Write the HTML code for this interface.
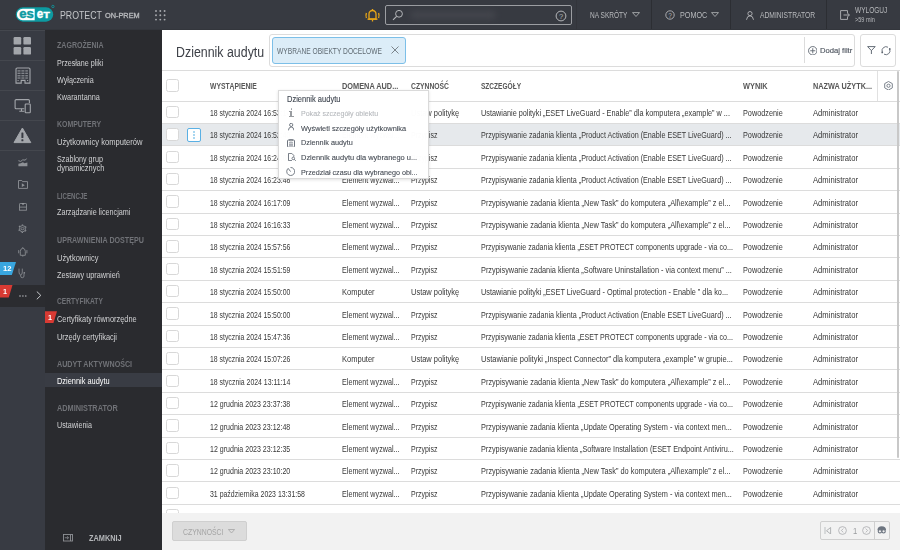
<!DOCTYPE html>
<html><head><meta charset="utf-8"><style>
*{box-sizing:border-box;margin:0;padding:0}
html,body{width:900px;height:550px;overflow:hidden;background:#fff;font-family:"Liberation Sans",sans-serif;}
.a{position:absolute}
.t{position:absolute;white-space:nowrap;line-height:0;transform-origin:0 0;transform:scaleX(var(--sx));}
.t::before{content:"";}
#hdr{left:0;top:0;width:900px;height:30px;background:#373a41;}
#s1{left:0;top:30px;width:45px;height:520px;background:#383b43;}
#s2{left:45px;top:30px;width:116.5px;height:520px;background:#2a2b2f;}
#main{left:161.5px;top:30px;width:738.5px;height:520px;background:#fff;}
.hd{color:#b8babd;font-size:8.5px;}
.sh{color:#707277;font-size:8.6px;font-weight:bold;}
.si{color:#d0d1d3;font-size:8.4px;}
.th{color:#575757;font-size:8.5px;font-weight:bold;}
.td{color:#383838;font-size:8.6px;}
.sep{position:absolute;background:#e1e1e1;height:1px;}
.cb{position:absolute;width:12.5px;height:12.5px;border:1px solid #d8d8d8;border-radius:2.5px;background:#fff;}
</style></head><body>

<div id="hdr" class="a"></div>
<div class="a" style="left:0;top:29px;width:900px;height:1px;background:#33363c"></div>
<svg class="a" style="left:15px;top:4px" width="41" height="19" viewBox="0 -2 41 19">
<rect x="0.8" y="1.3" width="37.4" height="14.4" rx="7.2" fill="#0d9aa1"/>
<path d="M7.7 2.7 H19.7 V14.3 H7.7 a5.8 5.8 0 0 1 0 -11.6 Z" fill="#fff"/>
<text x="4.2" y="11.6" textLength="14.5" lengthAdjust="spacingAndGlyphs" font-family="Liberation Sans" font-weight="bold" font-size="12.3" fill="#0d9aa1" stroke="#0d9aa1" stroke-width="0.45">es</text>
<text x="21.7" y="11.6" textLength="6.4" lengthAdjust="spacingAndGlyphs" font-family="Liberation Sans" font-weight="bold" font-size="12.3" fill="#fff" stroke="#fff" stroke-width="0.45">e</text>
<text x="28.5" y="11.6" textLength="6.2" lengthAdjust="spacingAndGlyphs" font-family="Liberation Sans" font-weight="bold" font-size="8.9" fill="#fff" stroke="#fff" stroke-width="0.45">T</text>
<circle cx="37.9" cy="0.5" r="1.2" fill="none" stroke="#0d9aa1" stroke-width="0.8"/>
</svg>
<div class="t hd" style="left:59.8px;top:14.8px;--sx:0.8121;font-size:10.8px;color:#c4c6c9;">PROTECT</div>
<div class="t hd" style="left:104.6px;top:15.8px;--sx:1.0662;font-size:6.9px;color:#b8babd;-webkit-text-stroke:0.3px #b8babd;">ON-PREM</div>
<svg class="a" style="left:155px;top:9.5px" width="12" height="12"><circle cx="1.0" cy="1.0" r="0.95" fill="#a9abaf"/><circle cx="1.0" cy="5.3" r="0.95" fill="#a9abaf"/><circle cx="1.0" cy="9.6" r="0.95" fill="#a9abaf"/><circle cx="5.3" cy="1.0" r="0.95" fill="#a9abaf"/><circle cx="5.3" cy="5.3" r="0.95" fill="#a9abaf"/><circle cx="5.3" cy="9.6" r="0.95" fill="#a9abaf"/><circle cx="9.6" cy="1.0" r="0.95" fill="#a9abaf"/><circle cx="9.6" cy="5.3" r="0.95" fill="#a9abaf"/><circle cx="9.6" cy="9.6" r="0.95" fill="#a9abaf"/></svg>
<svg class="a" style="left:364px;top:7px" width="17" height="16" viewBox="0 0 17 16">
<g fill="none" stroke="#e8a617" stroke-width="1.3">
<path d="M5 12 V7 a3.5 3.5 0 0 1 7 0 V12 Z"/>
<path d="M3.5 12.2 h10"/>
<path d="M8.5 2 v1.5 M8.5 12.5 v2"/>
<path d="M2.4 6 q-0.9 2.5 0 5 M14.6 6 q0.9 2.5 0 5"/>
</g></svg>
<div class="a" style="left:385.3px;top:5.2px;width:186.5px;height:19.7px;border:1px solid #9c9ea2;border-radius:2px"></div>
<div class="a" style="left:410px;top:11px;width:86px;height:8px;background:#45474e;filter:blur(3px);border-radius:4px;opacity:.9"></div>
<svg class="a" style="left:392px;top:8.5px" width="12" height="12" viewBox="0 0 12 12">
<circle cx="7" cy="4.8" r="3.4" fill="none" stroke="#b4b6b9" stroke-width="1"/>
<path d="M4.6 7.3 L1 10.9" stroke="#b4b6b9" stroke-width="1.1"/></svg>
<svg class="a" style="left:554.5px;top:9.5px" width="12" height="12" viewBox="0 0 12 12">
<circle cx="6" cy="6" r="4.9" fill="none" stroke="#b4b6b9" stroke-width="1"/>
<text x="6" y="8.9" text-anchor="middle" font-family="Liberation Sans" font-size="7.5" fill="#b4b6b9">?</text></svg>
<div class="a" style="left:576.2px;top:0;width:1px;height:29px;background:#33353b"></div>
<div class="a" style="left:650.8px;top:0;width:1px;height:29px;background:#2c2e33"></div>
<div class="a" style="left:730.4px;top:0;width:1px;height:29px;background:#2c2e33"></div>
<div class="a" style="left:826.1px;top:0;width:1px;height:29px;background:#2c2e33"></div>
<div class="t hd" style="left:589.6px;top:15.1px;--sx:0.7687;">NA SKRÓTY</div>
<svg class="a" style="left:631.5px;top:12.4px" width="8" height="5" viewBox="0 0 8 5"><path d="M0.5 0.6 h7 L4 4.5z" fill="none" stroke="#b8babd" stroke-width="0.8"/></svg>
<svg class="a" style="left:665px;top:10.3px" width="10" height="10" viewBox="0 0 10 10">
<circle cx="5" cy="5" r="4.2" fill="none" stroke="#b4b6b9" stroke-width="0.9"/>
<text x="5" y="7.6" text-anchor="middle" font-family="Liberation Sans" font-size="6.5" fill="#b4b6b9">?</text></svg>
<div class="t hd" style="left:679.6px;top:15.1px;--sx:0.8467;">POMOC</div>
<svg class="a" style="left:711px;top:12.4px" width="8" height="5" viewBox="0 0 8 5"><path d="M0.5 0.6 h7 L4 4.5z" fill="none" stroke="#b8babd" stroke-width="0.8"/></svg>
<svg class="a" style="left:745.5px;top:10.5px" width="8" height="9" viewBox="0 0 8 9">
<circle cx="4" cy="2.6" r="2.1" fill="none" stroke="#b4b6b9" stroke-width="0.9"/>
<path d="M0.5 8.8 q0.5 -4 3.5 -4 q3 0 3.5 4" fill="none" stroke="#b4b6b9" stroke-width="0.9"/></svg>
<div class="t hd" style="left:759.5px;top:15.1px;--sx:0.7934;">ADMINISTRATOR</div>
<svg class="a" style="left:839.5px;top:10.3px" width="10" height="10" viewBox="0 0 10 10">
<path d="M7.5 3 V0.6 H0.6 V9.4 H7.5 V7" fill="none" stroke="#b4b6b9" stroke-width="0.9"/>
<path d="M3.5 5 H9.4 M7.4 3 L9.4 5 L7.4 7" fill="none" stroke="#b4b6b9" stroke-width="0.9"/></svg>
<div class="t hd" style="left:854.9px;top:10.3px;--sx:0.7685;">WYLOGUJ</div>
<div class="t hd" style="left:855px;top:20.2px;--sx:0.88;font-size:6.3px;">&gt;59 min</div>
<div id="s1" class="a"></div>
<div class="a" style="left:0;top:30px;width:45px;height:1px;background:#44474e"></div>
<div class="a" style="left:0;top:60px;width:45px;height:1px;background:#44474e"></div>
<div class="a" style="left:0;top:90px;width:45px;height:1px;background:#44474e"></div>
<div class="a" style="left:0;top:120px;width:45px;height:1px;background:#44474e"></div>
<div class="a" style="left:0;top:150px;width:45px;height:1px;background:#44474e"></div>
<svg class="a" style="left:13px;top:37px" width="19" height="18" viewBox="0 0 19 18">
<rect x="0.6" y="0" width="7.6" height="7.6" rx="1.2" fill="#a3a6ab"/><rect x="10.4" y="0" width="7.6" height="7.6" rx="1.2" fill="#a3a6ab"/>
<rect x="0.6" y="10" width="7.6" height="7.6" rx="1.2" fill="#a3a6ab"/><rect x="10.4" y="10" width="7.6" height="7.6" rx="1.2" fill="#a3a6ab"/></svg>
<svg class="a" style="left:14.5px;top:66.5px" width="16" height="17" viewBox="0 0 16 17">
<path d="M1 16.1 V2.2 a1.2 1.2 0 0 1 1.2 -1.2 H13.8 a1.2 1.2 0 0 1 1.2 1.2 V16.1 H10 V13.4 H6.2 V16.1 Z" fill="none" stroke="#a3a6ab" stroke-width="1.1"/>
<g fill="#a3a6ab"><rect x="2.5" y="3.45" width="3" height="0.95"/><rect x="6.4" y="3.45" width="3" height="0.95"/><rect x="10.3" y="3.45" width="2.6" height="0.95"/><rect x="2.5" y="5.75" width="3" height="0.95"/><rect x="6.4" y="5.75" width="3" height="0.95"/><rect x="10.3" y="5.75" width="2.6" height="0.95"/><rect x="2.5" y="8.35" width="3" height="0.95"/><rect x="6.4" y="8.35" width="3" height="0.95"/><rect x="10.3" y="8.35" width="2.6" height="0.95"/><rect x="2.5" y="10.55" width="3" height="0.95"/><rect x="6.4" y="10.55" width="3" height="0.95"/><rect x="10.3" y="10.55" width="2.6" height="0.95"/><rect x="2.5" y="13" width="1.2" height="0.9"/><rect x="12" y="13" width="1.2" height="0.9"/></g></svg>
<svg class="a" style="left:13.5px;top:97.5px" width="18" height="16" viewBox="0 0 18 16">
<path d="M10.3 10.8 H2.1 a1 1 0 0 1 -1 -1 V2.6 a1 1 0 0 1 1 -1 H14.4 a1 1 0 0 1 1 1 V5" fill="none" stroke="#a3a6ab" stroke-width="1.1"/>
<path d="M5.3 13.3 H10.3 M7.5 10.8 V13.3" fill="none" stroke="#a3a6ab" stroke-width="1.1"/>
<rect x="11.2" y="6.0" width="5.1" height="8.7" rx="0.8" fill="none" stroke="#a3a6ab" stroke-width="1.1"/></svg>
<svg class="a" style="left:13px;top:127px" width="19" height="17" viewBox="0 0 19 17">
<path d="M9.4 1 L17.8 15.6 H1 Z" fill="#a3a6ab" stroke="#a3a6ab" stroke-width="1" stroke-linejoin="round"/>
<rect x="8.4" y="5.4" width="2" height="5.6" rx="0.5" fill="#383b43"/><rect x="8.4" y="12.3" width="2" height="1.9" rx="0.5" fill="#383b43"/></svg>
<svg class="a" style="left:17.5px;top:157.5px" width="10" height="9" viewBox="0 0 10 9">
<path d="M0.4 2.7 L2.7 3.4 L4.7 1.9 L7.3 2.1 L8.5 0.6" fill="none" stroke="#8e9196" stroke-width="1" stroke-linejoin="round"/>
<path d="M0.4 8.3 V5.7 L2.7 5.3 L4.9 4.2 L6.5 5.3 L9.4 4.4 V8.3 Z" fill="#8e9196"/></svg>
<svg class="a" style="left:17.5px;top:180px" width="10" height="9" viewBox="0 0 10 9">
<path d="M0.5 8.4 V0.5 H3.8 L4.6 1.6 H9.5 V8.4 Z" fill="none" stroke="#8e9196" stroke-width="0.9"/>
<path d="M3.8 3.3 V7 L6.8 5.15 Z" fill="#8e9196"/></svg>
<svg class="a" style="left:18.6px;top:202.6px" width="9" height="8" viewBox="0 0 9 8">
<path d="M0.5 4 V1.1 Q0.5 0.5 1.1 0.5 H6.9 Q7.5 0.5 7.5 1.1 V4" fill="none" stroke="#8e9196" stroke-width="0.85"/>
<rect x="0.45" y="4.1" width="7.1" height="3.1" fill="none" stroke="#8e9196" stroke-width="0.85"/>
<path d="M2.5 0.3 H5.5 L4 2.3 Z" fill="#9a9da2"/></svg>
<svg class="a" style="left:17.7px;top:223.8px" width="9" height="9.4" viewBox="0 0 9 9.4">
<circle cx="4.5" cy="4.7" r="3.1" fill="none" stroke="#8e9196" stroke-width="0.85"/>
<circle cx="4.5" cy="4.7" r="3.75" fill="none" stroke="#8e9196" stroke-width="1.1" stroke-dasharray="1.3 2.6" transform="rotate(-100 4.5 4.7)"/>
<ellipse cx="4.5" cy="4.7" rx="1.6" ry="1.1" fill="none" stroke="#8e9196" stroke-width="0.8"/></svg>
<svg class="a" style="left:17.5px;top:246.5px" width="11" height="10.5" viewBox="0 0 11 10.5">
<path d="M2.3 8.3 V4.4 Q2.3 1.7 4.8 1.2 Q7.3 1.7 7.3 4.4 V8.3 Z" fill="none" stroke="#8e9196" stroke-width="0.85"/>
<path d="M4.8 0.2 V1.2 M4.8 8.4 V9.6 M0.7 3.1 V6.3 M8.9 3.1 V6.3" fill="none" stroke="#8e9196" stroke-width="0.85"/></svg>
<svg class="a" style="left:18px;top:268px" width="8" height="10.5" viewBox="0 0 8 10.5">
<path d="M1 0.6 V4 Q1 6.8 2.7 6.8 Q4.3 6.8 4.3 4 V0.6" fill="none" stroke="#8e9196" stroke-width="0.8"/>
<path d="M2.7 6.8 V8.1 Q2.7 9.7 4.3 9.7 Q6 9.7 6 8 V5.6" fill="none" stroke="#8e9196" stroke-width="0.8"/>
<circle cx="6.3" cy="4.8" r="0.85" fill="#8e9196"/></svg>
<div class="a" style="left:0;top:262px;width:16px;height:13px;background:#39a6df;clip-path:polygon(0 0,100% 0,74% 100%,0 100%)"></div>
<div class="t " style="left:3.4px;top:269.4px;--sx:1.05;color:#fff;font-size:7.3px;font-weight:bold;">12</div>
<div class="a" style="left:0;top:285px;width:45px;height:21.9px;background:#2b2c30"></div>
<div class="a" style="left:0;top:285px;width:12.5px;height:12.5px;background:#d83a33;clip-path:polygon(0 0,100% 0,70% 100%,0 100%)"></div>
<div class="t " style="left:3.0px;top:291.9px;--sx:0.999;color:#fff;font-size:7.3px;font-weight:bold;">1</div>
<svg class="a" style="left:19px;top:295px" width="9" height="2"><circle cx="1.0" cy="1" r="0.8" fill="#b0b2b6"/><circle cx="3.9" cy="1" r="0.8" fill="#b0b2b6"/><circle cx="6.8" cy="1" r="0.8" fill="#b0b2b6"/></svg>
<svg class="a" style="left:35.5px;top:291.3px" width="6" height="9" viewBox="0 0 6 9"><path d="M0.8 0.5 L4.8 4.4 L0.8 8.3" fill="none" stroke="#c9cbce" stroke-width="1"/></svg>
<div id="s2" class="a"></div>
<div class="a" style="left:45px;top:373px;width:116.5px;height:14.3px;background:#393c44"></div>
<div class="t sh" style="left:57.3px;top:45.2px;--sx:0.8202;">ZAGROŻENIA</div>
<div class="t si" style="left:57.3px;top:62.7px;--sx:0.8537;">Przesłane pliki</div>
<div class="t si" style="left:57.3px;top:79.5px;--sx:0.8585;">Wyłączenia</div>
<div class="t si" style="left:57.3px;top:97px;--sx:0.8671;">Kwarantanna</div>
<div class="t sh" style="left:57.3px;top:124px;--sx:0.806;">KOMPUTERY</div>
<div class="t si" style="left:57.3px;top:142px;--sx:0.9039;">Użytkownicy komputerów</div>
<div class="t si" style="left:57.3px;top:158.6px;--sx:0.8591;">Szablony grup</div>
<div class="t si" style="left:57.3px;top:168.4px;--sx:0.893;">dynamicznych</div>
<div class="t sh" style="left:57.3px;top:195.6px;--sx:0.7153;">LICENCJE</div>
<div class="t si" style="left:57.3px;top:212.4px;--sx:0.8616;">Zarządzanie licencjami</div>
<div class="t sh" style="left:57.3px;top:239.8px;--sx:0.8297;">UPRAWNIENIA DOSTĘPU</div>
<div class="t si" style="left:57.3px;top:257.8px;--sx:0.8916;">Użytkownicy</div>
<div class="t si" style="left:57.3px;top:275.2px;--sx:0.8703;">Zestawy uprawnień</div>
<div class="t sh" style="left:57.3px;top:301.4px;--sx:0.7693;">CERTYFIKATY</div>
<div class="t si" style="left:57.3px;top:319.3px;--sx:0.8825;">Certyfikaty równorzędne</div>
<div class="t si" style="left:57.3px;top:336.8px;--sx:0.883;">Urzędy certyfikacji</div>
<div class="t sh" style="left:57.3px;top:363.7px;--sx:0.8308;">AUDYT AKTYWNOŚCI</div>
<div class="t si" style="left:57.3px;top:380.8px;--sx:0.8843;color:#fff;">Dziennik audytu</div>
<div class="t sh" style="left:57.3px;top:408px;--sx:0.8514;">ADMINISTRATOR</div>
<div class="t si" style="left:57.3px;top:425.3px;--sx:0.8519;">Ustawienia</div>
<div class="a" style="left:45px;top:311.2px;width:12px;height:12px;background:#d83a33;clip-path:polygon(0 0,100% 0,70% 100%,0 100%)"></div>
<div class="t " style="left:47.6px;top:317.9px;--sx:0.999;color:#fff;font-size:7.3px;font-weight:bold;">1</div>
<svg class="a" style="left:62.5px;top:534px" width="10" height="7.5" viewBox="0 0 10 7.5">
<rect x="0.5" y="0.5" width="9" height="6.5" fill="none" stroke="#8e9196" stroke-width="0.9"/>
<path d="M7.5 0.5 V7" stroke="#8e9196" stroke-width="0.9"/>
<path d="M1.8 3.75 H5.5 M4 2.3 L5.5 3.75 L4 5.2" fill="none" stroke="#8e9196" stroke-width="0.8"/></svg>
<div class="t sh" style="left:89.3px;top:538px;--sx:0.856;color:#b4b6b9;">ZAMKNIJ</div>
<div id="main" class="a"></div>

<div class="t " style="left:175.8px;top:51.5px;--sx:0.885;font-size:14px;color:#3d4047;">Dziennik audytu</div>
<div class="a" style="left:268.9px;top:34.2px;width:586.3px;height:32.6px;border:1px solid #dcdcdc;border-radius:3px"></div>
<div class="a" style="left:271.9px;top:37.2px;width:134px;height:26.5px;border:1px solid #7cbfe8;border-radius:3px;background:#dcedf8"></div>
<div class="t " style="left:277.4px;top:51.1px;--sx:0.8021;font-size:8.3px;color:#5f6a72;">WYBRANE OBIEKTY DOCELOWE</div>
<svg class="a" style="left:391px;top:46px" width="8" height="8" viewBox="0 0 8 8"><path d="M0.5 0.5 L7.5 7.5 M7.5 0.5 L0.5 7.5" stroke="#7b848b" stroke-width="1"/></svg>
<div class="a" style="left:804px;top:37.3px;width:1px;height:25.7px;background:#dcdcdc"></div>
<svg class="a" style="left:807.5px;top:45.8px" width="9.5" height="9.5" viewBox="0 0 9.5 9.5">
<circle cx="4.75" cy="4.75" r="4.2" fill="none" stroke="#5d6570" stroke-width="0.9"/>
<path d="M4.75 2.2 V7.3 M2.2 4.75 H7.3" stroke="#5d6570" stroke-width="0.9"/></svg>
<div class="t " style="left:819.7px;top:51px;--sx:0.9557;font-size:8px;color:#4f5660;-webkit-text-stroke:0.15px #4f5660;">Dodaj filtr</div>
<div class="a" style="left:860.4px;top:34.2px;width:35.6px;height:32.6px;border:1px solid #dcdcdc;border-radius:3px"></div>
<svg class="a" style="left:866.5px;top:46px" width="9" height="8.5" viewBox="0 0 9 8.5">
<path d="M0.6 0.6 H8.2 L4.4 4.6 Z M4.4 4.4 V8" fill="none" stroke="#5d6570" stroke-width="0.95" stroke-linejoin="round"/></svg>
<svg class="a" style="left:880.5px;top:45.8px" width="10" height="10" viewBox="0 0 10 10">
<path d="M7 1.24 A4 4 0 0 0 1.24 6.07 M3 8.16 A4 4 0 0 0 8.76 3.33" fill="none" stroke="#5d6570" stroke-width="0.9"/>
<circle cx="8.76" cy="3.0" r="0.9" fill="#5d6570"/><circle cx="1.24" cy="6.4" r="0.9" fill="#5d6570"/></svg>
<div class="a" style="left:161.5px;top:70px;width:738.5px;height:1px;background:#dcdcdc"></div>
<div class="cb" style="left:166.4px;top:79px"></div>
<div class="t th" style="left:209.7px;top:85.7px;--sx:0.7974;">WYSTĄPIENIE</div>
<div class="t th" style="left:341.7px;top:85.7px;--sx:0.8659;">DOMENA AUD...</div>
<div class="t th" style="left:411px;top:85.7px;--sx:0.7966;">CZYNNOŚĆ</div>
<div class="t th" style="left:480.7px;top:85.7px;--sx:0.7699;">SZCZEGÓŁY</div>
<div class="t th" style="left:743.2px;top:85.7px;--sx:0.8679;">WYNIK</div>
<div class="t th" style="left:813.2px;top:85.7px;--sx:0.8597;">NAZWA UŻYTK...</div>
<div class="a" style="left:877.3px;top:70.5px;width:1px;height:31px;background:#e1e1e1"></div>
<svg class="a" style="left:884.3px;top:80.8px" width="9" height="9.5" viewBox="0 0 9 9.5">
<path d="M4.5 0.5 L8.3 2.6 V6.9 L4.5 9 L0.7 6.9 V2.6 Z" fill="none" stroke="#6d7580" stroke-width="0.9" stroke-linejoin="round"/>
<circle cx="4.5" cy="4.75" r="1.6" fill="none" stroke="#6d7580" stroke-width="0.9"/></svg>
<div class="a" style="left:161.5px;top:101px;width:738.5px;height:1px;background:#dcdcdc"></div>
<div class="a" style="left:161.5px;top:123px;width:738.5px;height:1px;background:#dcdcdc"></div>
<div class="a" style="left:161.5px;top:145px;width:738.5px;height:1px;background:#dcdcdc"></div>
<div class="a" style="left:161.5px;top:168px;width:738.5px;height:1px;background:#dcdcdc"></div>
<div class="a" style="left:161.5px;top:190px;width:738.5px;height:1px;background:#dcdcdc"></div>
<div class="a" style="left:161.5px;top:213px;width:738.5px;height:1px;background:#dcdcdc"></div>
<div class="a" style="left:161.5px;top:235px;width:738.5px;height:1px;background:#dcdcdc"></div>
<div class="a" style="left:161.5px;top:257px;width:738.5px;height:1px;background:#dcdcdc"></div>
<div class="a" style="left:161.5px;top:280px;width:738.5px;height:1px;background:#dcdcdc"></div>
<div class="a" style="left:161.5px;top:302px;width:738.5px;height:1px;background:#dcdcdc"></div>
<div class="a" style="left:161.5px;top:325px;width:738.5px;height:1px;background:#dcdcdc"></div>
<div class="a" style="left:161.5px;top:347px;width:738.5px;height:1px;background:#dcdcdc"></div>
<div class="a" style="left:161.5px;top:369px;width:738.5px;height:1px;background:#dcdcdc"></div>
<div class="a" style="left:161.5px;top:392px;width:738.5px;height:1px;background:#dcdcdc"></div>
<div class="a" style="left:161.5px;top:414px;width:738.5px;height:1px;background:#dcdcdc"></div>
<div class="a" style="left:161.5px;top:437px;width:738.5px;height:1px;background:#dcdcdc"></div>
<div class="a" style="left:161.5px;top:459px;width:738.5px;height:1px;background:#dcdcdc"></div>
<div class="a" style="left:161.5px;top:481px;width:738.5px;height:1px;background:#dcdcdc"></div>
<div class="a" style="left:161.5px;top:504px;width:738.5px;height:1px;background:#dcdcdc"></div>
<div class="a" style="left:161.5px;top:526px;width:738.5px;height:1px;background:#dcdcdc"></div>
<div class="cb" style="left:166.4px;top:105.7px"></div>
<div class="t td" style="left:209.5px;top:112.9px;--sx:0.8002;">18 stycznia 2024 16:53:14</div>
<div class="t td" style="left:341.6px;top:112.9px;--sx:0.8748;">Komputer</div>
<div class="t td" style="left:411px;top:112.9px;--sx:0.8699;">Ustaw politykę</div>
<div class="t td" style="left:480.9px;top:112.9px;--sx:0.8492;">Ustawianie polityki „ESET LiveGuard - Enable” dla komputera „example” w ...</div>
<div class="t td" style="left:743.2px;top:112.9px;--sx:0.8478;">Powodzenie</div>
<div class="t td" style="left:813.2px;top:112.9px;--sx:0.8889;">Administrator</div>
<div class="a" style="left:161.5px;top:124px;width:738.5px;height:21px;background:#e6e9ec"></div>
<div class="cb" style="left:166.4px;top:128.1px"></div>
<div class="t td" style="left:209.5px;top:135.29999999999998px;--sx:0.8002;">18 stycznia 2024 16:52:40</div>
<div class="t td" style="left:341.6px;top:135.29999999999998px;--sx:0.836;">Element wyzwal...</div>
<div class="t td" style="left:411px;top:135.29999999999998px;--sx:0.8127;">Przypisz</div>
<div class="t td" style="left:480.9px;top:135.29999999999998px;--sx:0.8355;">Przypisywanie zadania klienta „Product Activation (Enable ESET LiveGuard) ...</div>
<div class="t td" style="left:743.2px;top:135.29999999999998px;--sx:0.8478;">Powodzenie</div>
<div class="t td" style="left:813.2px;top:135.29999999999998px;--sx:0.8889;">Administrator</div>
<div class="cb" style="left:166.4px;top:150.5px"></div>
<div class="t td" style="left:209.5px;top:157.7px;--sx:0.8002;">18 stycznia 2024 16:24:05</div>
<div class="t td" style="left:341.6px;top:157.7px;--sx:0.836;">Element wyzwal...</div>
<div class="t td" style="left:411px;top:157.7px;--sx:0.8127;">Przypisz</div>
<div class="t td" style="left:480.9px;top:157.7px;--sx:0.8355;">Przypisywanie zadania klienta „Product Activation (Enable ESET LiveGuard) ...</div>
<div class="t td" style="left:743.2px;top:157.7px;--sx:0.8478;">Powodzenie</div>
<div class="t td" style="left:813.2px;top:157.7px;--sx:0.8889;">Administrator</div>
<div class="cb" style="left:166.4px;top:172.89999999999998px"></div>
<div class="t td" style="left:209.5px;top:180.09999999999997px;--sx:0.8002;">18 stycznia 2024 16:23:48</div>
<div class="t td" style="left:341.6px;top:180.09999999999997px;--sx:0.836;">Element wyzwal...</div>
<div class="t td" style="left:411px;top:180.09999999999997px;--sx:0.8127;">Przypisz</div>
<div class="t td" style="left:480.9px;top:180.09999999999997px;--sx:0.8355;">Przypisywanie zadania klienta „Product Activation (Enable ESET LiveGuard) ...</div>
<div class="t td" style="left:743.2px;top:180.09999999999997px;--sx:0.8478;">Powodzenie</div>
<div class="t td" style="left:813.2px;top:180.09999999999997px;--sx:0.8889;">Administrator</div>
<div class="cb" style="left:166.4px;top:195.29999999999998px"></div>
<div class="t td" style="left:209.5px;top:202.49999999999997px;--sx:0.8002;">18 stycznia 2024 16:17:09</div>
<div class="t td" style="left:341.6px;top:202.49999999999997px;--sx:0.836;">Element wyzwal...</div>
<div class="t td" style="left:411px;top:202.49999999999997px;--sx:0.8127;">Przypisz</div>
<div class="t td" style="left:480.9px;top:202.49999999999997px;--sx:0.8596;">Przypisywanie zadania klienta „New Task” do komputera „All\example” z el...</div>
<div class="t td" style="left:743.2px;top:202.49999999999997px;--sx:0.8478;">Powodzenie</div>
<div class="t td" style="left:813.2px;top:202.49999999999997px;--sx:0.8889;">Administrator</div>
<div class="cb" style="left:166.4px;top:217.7px"></div>
<div class="t td" style="left:209.5px;top:224.89999999999998px;--sx:0.8002;">18 stycznia 2024 16:16:33</div>
<div class="t td" style="left:341.6px;top:224.89999999999998px;--sx:0.836;">Element wyzwal...</div>
<div class="t td" style="left:411px;top:224.89999999999998px;--sx:0.8127;">Przypisz</div>
<div class="t td" style="left:480.9px;top:224.89999999999998px;--sx:0.8596;">Przypisywanie zadania klienta „New Task” do komputera „All\example” z el...</div>
<div class="t td" style="left:743.2px;top:224.89999999999998px;--sx:0.8478;">Powodzenie</div>
<div class="t td" style="left:813.2px;top:224.89999999999998px;--sx:0.8889;">Administrator</div>
<div class="cb" style="left:166.4px;top:240.09999999999997px"></div>
<div class="t td" style="left:209.5px;top:247.29999999999995px;--sx:0.8002;">18 stycznia 2024 15:57:56</div>
<div class="t td" style="left:341.6px;top:247.29999999999995px;--sx:0.836;">Element wyzwal...</div>
<div class="t td" style="left:411px;top:247.29999999999995px;--sx:0.8127;">Przypisz</div>
<div class="t td" style="left:480.9px;top:247.29999999999995px;--sx:0.8236;">Przypisywanie zadania klienta „ESET PROTECT components upgrade - via co...</div>
<div class="t td" style="left:743.2px;top:247.29999999999995px;--sx:0.8478;">Powodzenie</div>
<div class="t td" style="left:813.2px;top:247.29999999999995px;--sx:0.8889;">Administrator</div>
<div class="cb" style="left:166.4px;top:262.49999999999994px"></div>
<div class="t td" style="left:209.5px;top:269.69999999999993px;--sx:0.8002;">18 stycznia 2024 15:51:59</div>
<div class="t td" style="left:341.6px;top:269.69999999999993px;--sx:0.836;">Element wyzwal...</div>
<div class="t td" style="left:411px;top:269.69999999999993px;--sx:0.8127;">Przypisz</div>
<div class="t td" style="left:480.9px;top:269.69999999999993px;--sx:0.8569;">Przypisywanie zadania klienta „Software Uninstallation - via context menu” ...</div>
<div class="t td" style="left:743.2px;top:269.69999999999993px;--sx:0.8478;">Powodzenie</div>
<div class="t td" style="left:813.2px;top:269.69999999999993px;--sx:0.8889;">Administrator</div>
<div class="cb" style="left:166.4px;top:284.9px"></div>
<div class="t td" style="left:209.5px;top:292.09999999999997px;--sx:0.8002;">18 stycznia 2024 15:50:00</div>
<div class="t td" style="left:341.6px;top:292.09999999999997px;--sx:0.8748;">Komputer</div>
<div class="t td" style="left:411px;top:292.09999999999997px;--sx:0.8699;">Ustaw politykę</div>
<div class="t td" style="left:480.9px;top:292.09999999999997px;--sx:0.8524;">Ustawianie polityki „ESET LiveGuard - Optimal protection - Enable ” dla ko...</div>
<div class="t td" style="left:743.2px;top:292.09999999999997px;--sx:0.8478;">Powodzenie</div>
<div class="t td" style="left:813.2px;top:292.09999999999997px;--sx:0.8889;">Administrator</div>
<div class="cb" style="left:166.4px;top:307.3px"></div>
<div class="t td" style="left:209.5px;top:314.5px;--sx:0.8002;">18 stycznia 2024 15:50:00</div>
<div class="t td" style="left:341.6px;top:314.5px;--sx:0.836;">Element wyzwal...</div>
<div class="t td" style="left:411px;top:314.5px;--sx:0.8127;">Przypisz</div>
<div class="t td" style="left:480.9px;top:314.5px;--sx:0.8355;">Przypisywanie zadania klienta „Product Activation (Enable ESET LiveGuard) ...</div>
<div class="t td" style="left:743.2px;top:314.5px;--sx:0.8478;">Powodzenie</div>
<div class="t td" style="left:813.2px;top:314.5px;--sx:0.8889;">Administrator</div>
<div class="cb" style="left:166.4px;top:329.7px"></div>
<div class="t td" style="left:209.5px;top:336.9px;--sx:0.8002;">18 stycznia 2024 15:47:36</div>
<div class="t td" style="left:341.6px;top:336.9px;--sx:0.836;">Element wyzwal...</div>
<div class="t td" style="left:411px;top:336.9px;--sx:0.8127;">Przypisz</div>
<div class="t td" style="left:480.9px;top:336.9px;--sx:0.8236;">Przypisywanie zadania klienta „ESET PROTECT components upgrade - via co...</div>
<div class="t td" style="left:743.2px;top:336.9px;--sx:0.8478;">Powodzenie</div>
<div class="t td" style="left:813.2px;top:336.9px;--sx:0.8889;">Administrator</div>
<div class="cb" style="left:166.4px;top:352.09999999999997px"></div>
<div class="t td" style="left:209.5px;top:359.29999999999995px;--sx:0.8002;">18 stycznia 2024 15:07:26</div>
<div class="t td" style="left:341.6px;top:359.29999999999995px;--sx:0.8748;">Komputer</div>
<div class="t td" style="left:411px;top:359.29999999999995px;--sx:0.8699;">Ustaw politykę</div>
<div class="t td" style="left:480.9px;top:359.29999999999995px;--sx:0.8746;">Ustawianie polityki „Inspect Connector” dla komputera „example” w grupie...</div>
<div class="t td" style="left:743.2px;top:359.29999999999995px;--sx:0.8478;">Powodzenie</div>
<div class="t td" style="left:813.2px;top:359.29999999999995px;--sx:0.8889;">Administrator</div>
<div class="cb" style="left:166.4px;top:374.49999999999994px"></div>
<div class="t td" style="left:209.5px;top:381.69999999999993px;--sx:0.8054;">18 stycznia 2024 13:11:14</div>
<div class="t td" style="left:341.6px;top:381.69999999999993px;--sx:0.836;">Element wyzwal...</div>
<div class="t td" style="left:411px;top:381.69999999999993px;--sx:0.8127;">Przypisz</div>
<div class="t td" style="left:480.9px;top:381.69999999999993px;--sx:0.8596;">Przypisywanie zadania klienta „New Task” do komputera „All\example” z el...</div>
<div class="t td" style="left:743.2px;top:381.69999999999993px;--sx:0.8478;">Powodzenie</div>
<div class="t td" style="left:813.2px;top:381.69999999999993px;--sx:0.8889;">Administrator</div>
<div class="cb" style="left:166.4px;top:396.9px"></div>
<div class="t td" style="left:209.5px;top:404.09999999999997px;--sx:0.8196;">12 grudnia 2023 23:37:38</div>
<div class="t td" style="left:341.6px;top:404.09999999999997px;--sx:0.836;">Element wyzwal...</div>
<div class="t td" style="left:411px;top:404.09999999999997px;--sx:0.8127;">Przypisz</div>
<div class="t td" style="left:480.9px;top:404.09999999999997px;--sx:0.8236;">Przypisywanie zadania klienta „ESET PROTECT components upgrade - via co...</div>
<div class="t td" style="left:743.2px;top:404.09999999999997px;--sx:0.8478;">Powodzenie</div>
<div class="t td" style="left:813.2px;top:404.09999999999997px;--sx:0.8889;">Administrator</div>
<div class="cb" style="left:166.4px;top:419.29999999999995px"></div>
<div class="t td" style="left:209.5px;top:426.49999999999994px;--sx:0.8196;">12 grudnia 2023 23:12:48</div>
<div class="t td" style="left:341.6px;top:426.49999999999994px;--sx:0.836;">Element wyzwal...</div>
<div class="t td" style="left:411px;top:426.49999999999994px;--sx:0.8127;">Przypisz</div>
<div class="t td" style="left:480.9px;top:426.49999999999994px;--sx:0.8541;">Przypisywanie zadania klienta „Update Operating System - via context men...</div>
<div class="t td" style="left:743.2px;top:426.49999999999994px;--sx:0.8478;">Powodzenie</div>
<div class="t td" style="left:813.2px;top:426.49999999999994px;--sx:0.8889;">Administrator</div>
<div class="cb" style="left:166.4px;top:441.7px"></div>
<div class="t td" style="left:209.5px;top:448.9px;--sx:0.8196;">12 grudnia 2023 23:12:35</div>
<div class="t td" style="left:341.6px;top:448.9px;--sx:0.836;">Element wyzwal...</div>
<div class="t td" style="left:411px;top:448.9px;--sx:0.8127;">Przypisz</div>
<div class="t td" style="left:480.9px;top:448.9px;--sx:0.8458;">Przypisywanie zadania klienta „Software Installation (ESET Endpoint Antiviru...</div>
<div class="t td" style="left:743.2px;top:448.9px;--sx:0.8478;">Powodzenie</div>
<div class="t td" style="left:813.2px;top:448.9px;--sx:0.8889;">Administrator</div>
<div class="cb" style="left:166.4px;top:464.09999999999997px"></div>
<div class="t td" style="left:209.5px;top:471.29999999999995px;--sx:0.8196;">12 grudnia 2023 23:10:20</div>
<div class="t td" style="left:341.6px;top:471.29999999999995px;--sx:0.836;">Element wyzwal...</div>
<div class="t td" style="left:411px;top:471.29999999999995px;--sx:0.8127;">Przypisz</div>
<div class="t td" style="left:480.9px;top:471.29999999999995px;--sx:0.8596;">Przypisywanie zadania klienta „New Task” do komputera „All\example” z el...</div>
<div class="t td" style="left:743.2px;top:471.29999999999995px;--sx:0.8478;">Powodzenie</div>
<div class="t td" style="left:813.2px;top:471.29999999999995px;--sx:0.8889;">Administrator</div>
<div class="cb" style="left:166.4px;top:486.49999999999994px"></div>
<div class="t td" style="left:209.5px;top:493.69999999999993px;--sx:0.8073;">31 października 2023 13:31:58</div>
<div class="t td" style="left:341.6px;top:493.69999999999993px;--sx:0.836;">Element wyzwal...</div>
<div class="t td" style="left:411px;top:493.69999999999993px;--sx:0.8127;">Przypisz</div>
<div class="t td" style="left:480.9px;top:493.69999999999993px;--sx:0.8541;">Przypisywanie zadania klienta „Update Operating System - via context men...</div>
<div class="t td" style="left:743.2px;top:493.69999999999993px;--sx:0.8478;">Powodzenie</div>
<div class="t td" style="left:813.2px;top:493.69999999999993px;--sx:0.8889;">Administrator</div>
<div class="cb" style="left:166.4px;top:508.9px"></div>
<div class="a" style="left:187px;top:128.1px;width:13.5px;height:13.8px;border:1px solid #5ab0e4;border-radius:2px;background:#fff"></div>
<svg class="a" style="left:192.7px;top:131.0px" width="2" height="8"><circle cx="1" cy="1" r="0.8" fill="#3ca4e0"/><circle cx="1" cy="4" r="0.8" fill="#3ca4e0"/><circle cx="1" cy="7" r="0.8" fill="#3ca4e0"/></svg>
<div class="a" style="left:897px;top:70.5px;width:2px;height:387px;background:#c8c8c8;border-radius:1px"></div>
<div class="a" style="left:277.8px;top:89.8px;width:151.2px;height:89.2px;background:rgba(255,255,255,.985);border:1px solid #dadada;box-shadow:0 1px 3px rgba(0,0,0,.12)"></div>
<div class="t " style="left:286.6px;top:98.8px;--sx:0.9044;font-size:8.3px;color:#3f4650;-webkit-text-stroke:0.12px #3f4650;">Dziennik audytu</div>
<div class="t " style="left:301.2px;top:113.60000000000001px;--sx:0.88;font-size:8px;color:#b5b8bc;-webkit-text-stroke:0.1px #b5b8bc;">Pokaż szczegóły obiektu</div>
<div class="t " style="left:301.2px;top:128.5px;--sx:0.917;font-size:8px;color:#444a53;-webkit-text-stroke:0.1px #444a53;">Wyświetl szczegóły użytkownika</div>
<div class="t " style="left:301.2px;top:143.1px;--sx:0.91;font-size:8px;color:#444a53;-webkit-text-stroke:0.1px #444a53;">Dziennik audytu</div>
<div class="t " style="left:301.2px;top:157.6px;--sx:0.933;font-size:8px;color:#444a53;-webkit-text-stroke:0.1px #444a53;">Dziennik audytu dla wybranego u...</div>
<div class="t " style="left:301.2px;top:172.5px;--sx:0.897;font-size:8px;color:#444a53;-webkit-text-stroke:0.1px #444a53;">Przedział czasu dla wybranego obi...</div>
<div class="a" style="left:290.6px;top:108.3px;width:1.8px;height:1.5px;border-radius:1px;background:#9a9da1"></div>
<div class="a" style="left:290.2px;top:110.8px;width:2.1px;height:5.4px;background:#9a9da1"></div>
<div class="a" style="left:289px;top:110.8px;width:1.3px;height:1px;background:#9a9da1"></div>
<div class="a" style="left:289px;top:115.6px;width:4.6px;height:1.3px;background:#9a9da1"></div>
<svg class="a" style="left:288px;top:123.4px" width="6.4" height="7.6" viewBox="0 0 6.4 7.6"><circle cx="3.2" cy="1.9" r="1.6" fill="none" stroke="#5d6570" stroke-width="0.85"/><path d="M0.4 7.4 q0.3 -3.4 2.8 -3.4 q2.5 0 2.8 3.4" fill="none" stroke="#5d6570" stroke-width="0.85"/></svg>
<svg class="a" style="left:287px;top:138.5px" width="8" height="8.7" viewBox="0 0 8 8.7"><rect x="0.5" y="1" width="7" height="7.2" rx="0.9" fill="none" stroke="#5d6570" stroke-width="0.9"/><rect x="2.4" y="0.4" width="3.2" height="1.4" rx="0.4" fill="#fff" stroke="#5d6570" stroke-width="0.8"/><path d="M2 3.8 H6 M2 5.3 H6 M2 6.8 H6" stroke="#5d6570" stroke-width="0.7"/></svg>
<svg class="a" style="left:287.8px;top:153px" width="8.2" height="8" viewBox="0 0 8.2 8"><path d="M4 7.6 H0.5 V0.4 H3.8 L5.8 2.4 V3.8" fill="none" stroke="#5d6570" stroke-width="0.85"/><circle cx="5.3" cy="5.4" r="1.3" fill="none" stroke="#5d6570" stroke-width="0.8"/><path d="M6.2 6.3 L7.8 7.8" stroke="#5d6570" stroke-width="0.85"/></svg>
<svg class="a" style="left:286.2px;top:167px" width="9" height="9" viewBox="0 0 9 9"><path d="M2.2 1.4 A4 4 0 1 0 4.5 0.5" fill="none" stroke="#5d6570" stroke-width="0.85"/><path d="M2.2 1.4 L4.6 4.6" stroke="#5d6570" stroke-width="0.85"/></svg>
<div class="a" style="left:161.5px;top:512.6px;width:738.5px;height:38px;background:#f2f2f2"></div>
<div class="a" style="left:171.7px;top:521.2px;width:75px;height:19.5px;background:#dcdcdc;border:1px solid #cfcfcf;border-radius:2px"></div>
<div class="t " style="left:182.5px;top:531.7px;--sx:0.7639;font-size:9px;color:#a4a4a4;">CZYNNOŚCI</div>
<svg class="a" style="left:228px;top:529px" width="7" height="4.5" viewBox="0 0 7 4.5"><path d="M0.4 0.5 h6.2 L3.5 4z" fill="none" stroke="#a4a4a4" stroke-width="0.8"/></svg>
<div class="a" style="left:820px;top:521.3px;width:69.7px;height:18.4px;border:1px solid #cfcfcf;border-radius:2px"></div>
<div class="a" style="left:874.3px;top:521.3px;width:1px;height:18.4px;background:#cfcfcf"></div>
<svg class="a" style="left:824px;top:526.8px" width="8" height="7.5" viewBox="0 0 8 7.5"><path d="M1 0 V7.5" stroke="#d0d2d4" stroke-width="1.6"/><path d="M6.6 0.5 L2.5 3.75 L6.6 7 Z" fill="none" stroke="#a9abae" stroke-width="0.9"/></svg>
<svg class="a" style="left:838px;top:526px" width="9" height="9" viewBox="0 0 9 9"><circle cx="4.5" cy="4.5" r="3.9" fill="none" stroke="#a9abae" stroke-width="0.8"/><path d="M5.3 2.6 L3.4 4.5 L5.3 6.4" fill="none" stroke="#a9abae" stroke-width="0.8"/></svg>
<div class="t " style="left:852.6px;top:530.8px;--sx:0.9;font-size:8.5px;color:#9a9c9f;">1</div>
<svg class="a" style="left:861.5px;top:526px" width="9" height="9" viewBox="0 0 9 9"><circle cx="4.5" cy="4.5" r="3.9" fill="none" stroke="#a9abae" stroke-width="0.8"/><path d="M3.7 2.6 L5.6 4.5 L3.7 6.4" fill="none" stroke="#a9abae" stroke-width="0.8"/></svg>
<svg class="a" style="left:877.3px;top:526.3px" width="9.5" height="8" viewBox="0 0 9.5 8"><path d="M0.4 4.2 Q0.6 0.3 4.75 0.3 Q8.9 0.3 9.1 4.2 Z" fill="#6d7580"/><circle cx="2.9" cy="5.3" r="1.7" fill="#f2f2f2" stroke="#6d7580" stroke-width="1.1"/><circle cx="6.6" cy="5.3" r="1.7" fill="#f2f2f2" stroke="#6d7580" stroke-width="1.1"/></svg>
</body></html>
